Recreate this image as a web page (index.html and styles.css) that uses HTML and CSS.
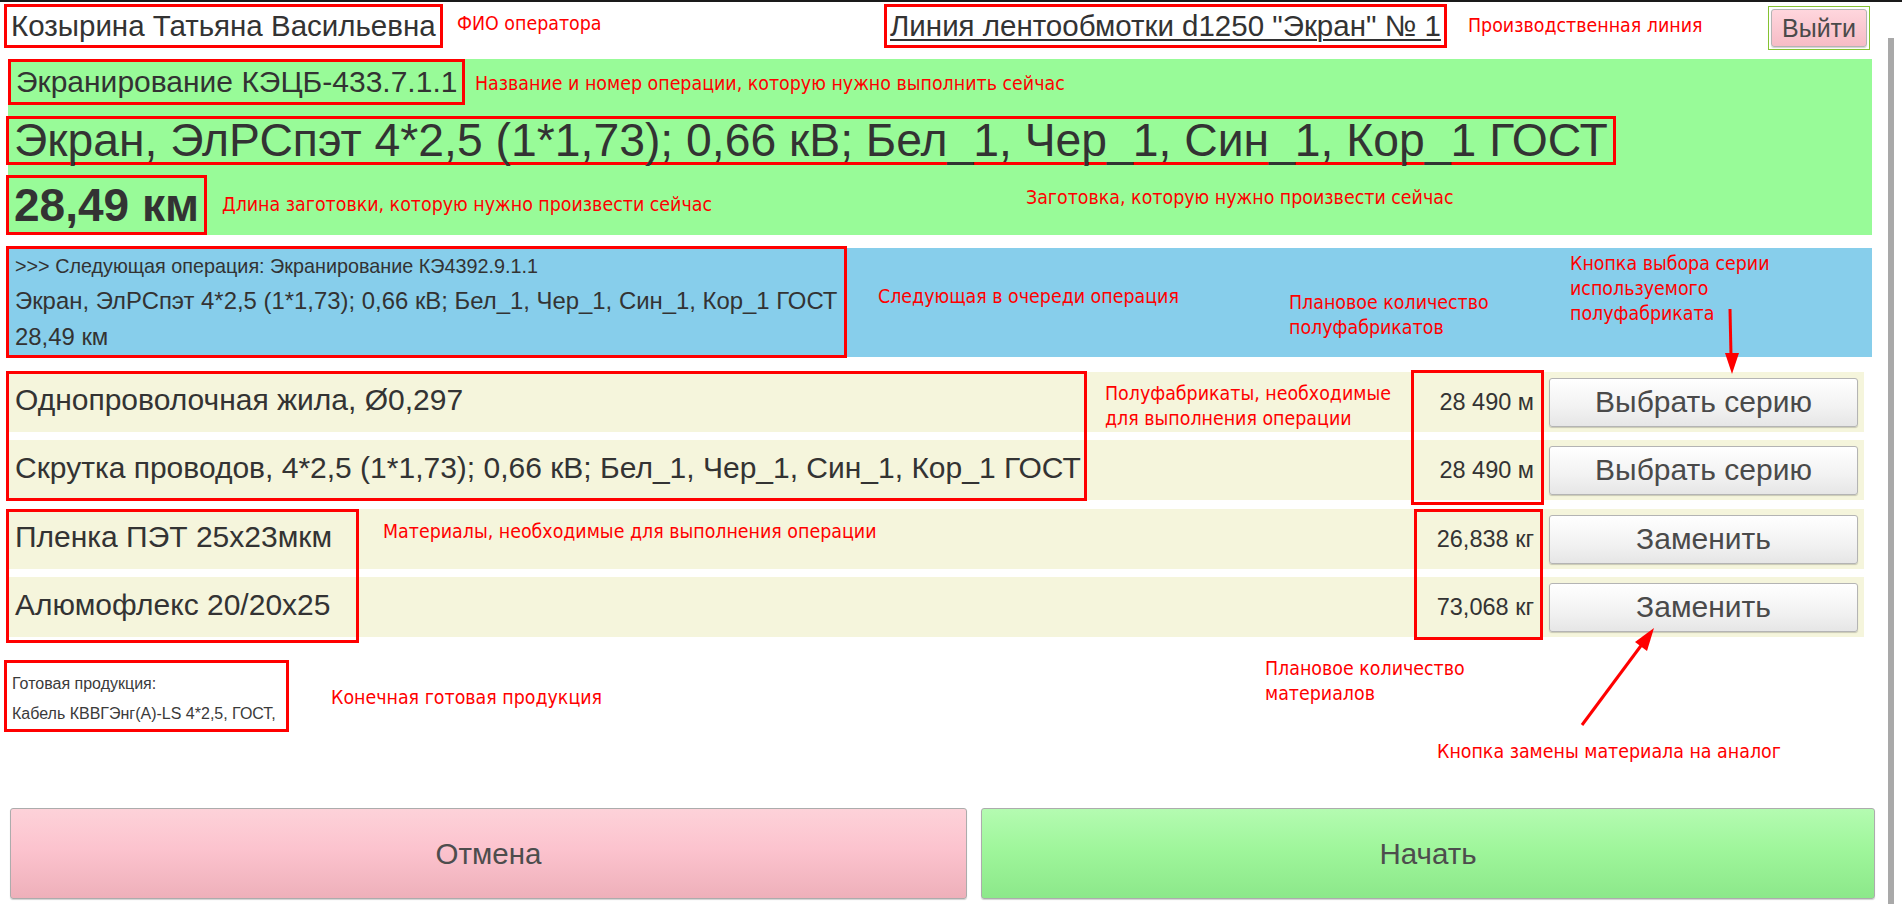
FILE: index.html
```html
<!DOCTYPE html>
<html lang="ru">
<head>
<meta charset="utf-8">
<title>Операция</title>
<link rel="stylesheet" href="styles.css">
</head>
<body>
<div class="screen">
  <main class="page">
    <header class="top">
      <div class="fio mark">Козырина Татьяна Васильевна</div>
      <div class="line mark">Линия лентообмотки d1250 "Экран" № 1</div>
      <div class="spacer"></div>
      <div class="exit-wrap"><button class="btn btn-exit">Выйти</button></div>
    </header>

    <section class="current">
      <div class="op mark">Экранирование КЭЦБ-433.7.1.1</div>
      <div class="blank mark">Экран, ЭлРСпэт 4*2,5 (1*1,73); 0,66 кВ; Бел_1, Чер_1, Син_1, Кор_1 ГОСТ</div>
      <div class="len mark">28,49 км</div>
    </section>

    <section class="next">
      <div class="next-box mark">
        <div class="n1">&gt;&gt;&gt; Следующая операция: Экранирование КЭ4392.9.1.1</div>
        <div class="n2">Экран, ЭлРСпэт 4*2,5 (1*1,73); 0,66 кВ; Бел_1, Чер_1, Син_1, Кор_1 ГОСТ</div>
        <div class="n2">28,49 км</div>
      </div>
    </section>

    <section class="items semi">
      <div class="cell name r1">Однопроволочная жила, Ø0,297</div>
      <div class="cell fill r1"></div>
      <div class="cell qty r1">28 490 м</div>
      <div class="cell act r1"><button class="btn btn-row">Выбрать серию</button></div>
      <div class="cell name r2">Скрутка проводов, 4*2,5 (1*1,73); 0,66 кВ; Бел_1, Чер_1, Син_1, Кор_1 ГОСТ</div>
      <div class="cell fill r2"></div>
      <div class="cell qty r2">28 490 м</div>
      <div class="cell act r2"><button class="btn btn-row">Выбрать серию</button></div>
      <div class="frame frame-names"></div>
      <div class="frame frame-qty"></div>
    </section>

    <section class="items mats">
      <div class="cell name r1">Пленка ПЭТ 25x23мкм</div>
      <div class="cell fill r1"></div>
      <div class="cell qty r1">26,838 кг</div>
      <div class="cell act r1"><button class="btn btn-row">Заменить</button></div>
      <div class="cell name r2">Алюмофлекс 20/20x25</div>
      <div class="cell fill r2"></div>
      <div class="cell qty r2">73,068 кг</div>
      <div class="cell act r2"><button class="btn btn-row">Заменить</button></div>
      <div class="frame frame-names"></div>
      <div class="frame frame-qty"></div>
    </section>

    <div class="product mark">
      <div class="p-line">Готовая продукция:</div>
      <div class="p-line">Кабель КВВГЭнг(А)-LS 4*2,5, ГОСТ,</div>
    </div>

    <div class="actions">
      <button class="btn btn-cancel">Отмена</button>
      <button class="btn btn-start">Начать</button>
    </div>

    <div class="note note-fio">ФИО оператора</div>
    <div class="note note-line">Производственная линия</div>
    <div class="note note-op">Название и номер операции, которую нужно выполнить сейчас</div>
    <div class="note note-len">Длина заготовки, которую нужно произвести сейчас</div>
    <div class="note note-blank">Заготовка, которую нужно произвести сейчас</div>
    <div class="note note-next">Следующая в очереди операция</div>
    <div class="note note-plan-semi">Плановое количество<br>полуфабрикатов</div>
    <div class="note note-series">Кнопка выбора серии<br>используемого<br>полуфабриката</div>
    <div class="note note-semi">Полуфабрикаты, необходимые<br>для выполнения операции</div>
    <div class="note note-mats">Материалы, необходимые для выполнения операции</div>
    <div class="note note-product">Конечная готовая продукция</div>
    <div class="note note-plan-mats">Плановое количество<br>материалов</div>
    <div class="note note-replace">Кнопка замены материала на аналог</div>

    <svg class="arrows" width="1888" height="904" viewBox="0 0 1888 904">
      <line x1="1730" y1="307" x2="1731" y2="354" stroke="#ff0000" stroke-width="3"/>
      <polygon points="1732,372 1725,351 1739,351" fill="#ff0000"/>
      <line x1="1582" y1="723" x2="1643" y2="641" stroke="#ff0000" stroke-width="3"/>
      <polygon points="1654,626 1647,649 1635,640" fill="#ff0000"/>
    </svg>
  </main>
  <div class="scrollbar"></div>
</div>
</body>
</html>
```

FILE: styles.css
```css
html, body {
  margin: 0;
  padding: 0;
  background: #ffffff;
}

body {
  font-family: "Liberation Sans", Arial, sans-serif;
  color: #333333;
  border-top: 2px solid #1a1a1a;
  height: 902px;
  overflow: hidden;
}

.screen {
  display: flex;
  width: 1902px;
}

.page {
  position: relative;
  flex: 0 0 1888px;
  height: 902px;
}

.scrollbar {
  flex: 0 0 6px;
  margin-top: 36px;
  height: 866px;
  background: #a9a9a9;
}

.mark {
  border: 3px solid #ff0000;
  box-sizing: border-box;
}

/* header */
.top {
  display: grid;
  grid-template-columns: 880px auto 1fr auto;
  align-items: start;
  padding: 2px 0 0 4px;
  height: 53px;
  box-sizing: border-box;
}

.fio {
  justify-self: start;
  font-size: 29.5px;
  line-height: 38px;
  padding: 0 4px;
}

.line {
  font-size: 29.5px;
  line-height: 38px;
  padding: 0 3px;
  text-decoration: underline;
  text-underline-offset: 3px;
  text-decoration-thickness: 2px;
}

.exit-wrap {
  border: 1px solid #86c232;
  padding: 2px;
  margin: 2px 18px 0 0;
}

.btn {
  font-family: "Liberation Sans", Arial, sans-serif;
  color: #4a4a4a;
  border: 1px solid #b4b4b4;
  border-radius: 3px;
  box-shadow: 0 1px 1px rgba(0, 0, 0, 0.18);
  cursor: pointer;
  padding: 0;
}

.btn-exit {
  display: block;
  width: 96px;
  height: 38px;
  font-size: 25px;
  background: linear-gradient(#ffd6dd, #f6bcc6);
}

/* current operation */
.current {
  margin: 4px 0 0 8px;
  width: 1864px;
  height: 176px;
  background: #98fb98;
  display: flex;
  flex-direction: column;
  align-items: flex-start;
}

.op {
  font-size: 30px;
  line-height: 40px;
  padding: 0 5px;
}

.blank {
  margin: 11px 0 0 -2px;
  font-size: 46.3px;
  line-height: 43px;
  padding: 0 5px;
}

.len {
  margin: 10px 0 0 -2px;
  font-size: 46px;
  font-weight: bold;
  line-height: 54px;
  padding: 0 5px;
}

/* next operation */
.next {
  margin: 13px 0 0 8px;
  width: 1864px;
  height: 109px;
  background: #87ceeb;
}

.next-box {
  display: inline-block;
  margin: -2px 0 0 -2px;
  padding: 0 6px;
  width: 841px;
}

.n1 {
  font-size: 19.8px;
  line-height: 34px;
}

.n2 {
  font-size: 23.9px;
  line-height: 36px;
}

/* item tables */
.items {
  display: grid;
  grid-template-columns: var(--name-w) 1fr 135px 318px;
  grid-template-rows: 60px 60px;
  row-gap: 8px;
  margin-left: 8px;
  width: 1856px;
}

.semi {
  --name-w: 1079px;
  margin-top: 15px;
}

.mats {
  --name-w: 351px;
  margin-top: 9px;
}

.cell {
  background: #f5f5dc;
  display: flex;
  align-items: center;
}

.r1 { grid-row: 1; }
.r2 { grid-row: 2; }

.name {
  grid-column: 1;
  font-size: 30px;
  padding: 0 0 4px 7px;
  white-space: nowrap;
}

.fill { grid-column: 2; }

.qty {
  grid-column: 3;
  justify-content: flex-end;
  font-size: 23.5px;
  padding-right: 12px;
}

.act {
  grid-column: 4;
  padding: 0 6px 0 3px;
}

.btn-row {
  width: 100%;
  height: 49px;
  font-size: 30px;
  background: linear-gradient(#ffffff, #f2f2f2 60%, #e6e6e6);
}

.frame {
  border: 3px solid #ff0000;
  pointer-events: none;
  box-sizing: border-box;
}

.frame-names {
  grid-column: 1;
  grid-row: 1 / 3;
  margin: -1px 0 -1px -2px;
}

.frame-qty {
  grid-column: 3;
  grid-row: 1 / 3;
  margin: -2px 2px -5px 0;
}

.mats .frame-names {
  margin: 0 0 -6px -2px;
}

.mats .frame-qty {
  margin: 0 3px -3px 3px;
}

/* product */
.product {
  margin: 23px 0 0 4px;
  width: 285px;
  height: 72px;
  padding: 6px 0 0 5px;
}

.p-line {
  font-size: 16px;
  line-height: 30px;
  color: #3a3a3a;
}

/* bottom actions */
.actions {
  display: flex;
  gap: 14px;
  margin: 76px 0 0 10px;
  width: 1865px;
}

.btn-cancel,
.btn-start {
  height: 91px;
  font-size: 29.5px;
  color: #4d4d4d;
  border-color: #acacac;
}

.btn-cancel {
  flex: 0 0 957px;
  background: linear-gradient(#fdd2d9, #fcc3ce 45%, #eeb0ba);
}

.btn-start {
  flex: 1;
  background: linear-gradient(#b4fbb1, #9ff69b 45%, #8ce88a);
}

/* annotations */
.note {
  position: absolute;
  font-family: "DejaVu Sans Condensed", "DejaVu Sans", sans-serif;
  font-stretch: condensed;
  font-size: 19.4px;
  line-height: 25px;
  color: #ff0000;
  white-space: nowrap;
}

.note-fio { left: 457px; top: 9px; }
.note-line { left: 1468px; top: 11px; }
.note-op { left: 475px; top: 69px; }
.note-len { left: 222px; top: 190px; }
.note-blank { left: 1026px; top: 183px; }
.note-next { left: 878px; top: 282px; }
.note-plan-semi { left: 1289px; top: 288px; }
.note-series { left: 1570px; top: 249px; }
.note-semi { left: 1105px; top: 379px; }
.note-mats { left: 383px; top: 517px; }
.note-product { left: 331px; top: 683px; }
.note-plan-mats { left: 1265px; top: 654px; }
.note-replace { left: 1437px; top: 737px; }

.arrows {
  position: absolute;
  left: 0;
  top: 0;
  pointer-events: none;
}
```
